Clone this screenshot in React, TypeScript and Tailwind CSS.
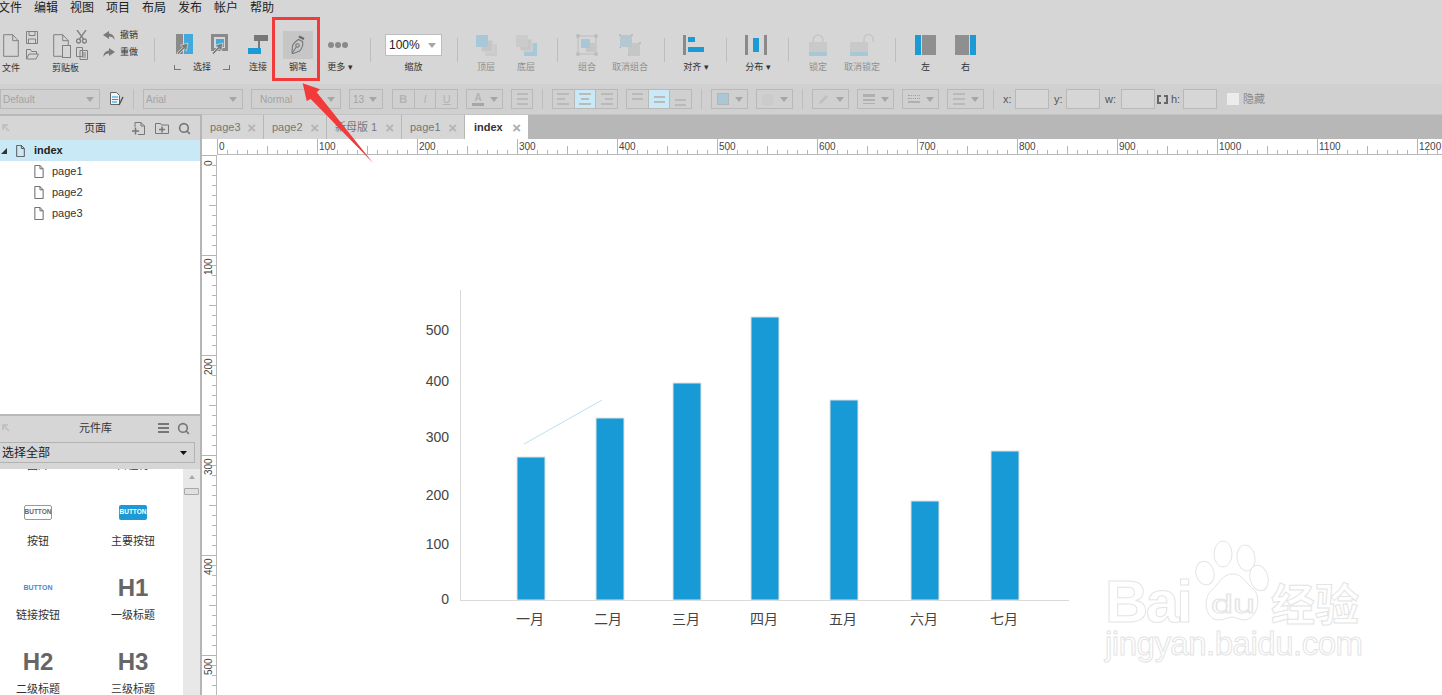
import type { ReactNode } from "react";
import { Search } from "lucide-react";

const menus = ["文件", "编辑", "视图", "项目", "布局", "发布", "帐户", "帮助"];

const bars = [
  { x: 517, top: 457, label: "一月", cx: 530 },
  { x: 596, top: 418, label: "二月", cx: 608 },
  { x: 673, top: 383, label: "三月", cx: 686 },
  { x: 751, top: 317, label: "四月", cx: 764 },
  { x: 830, top: 400, label: "五月", cx: 843 },
  { x: 911, top: 501, label: "六月", cx: 924 },
  { x: 991, top: 451, label: "七月", cx: 1004 },
];

const yLabels = [
  { v: "500", y: 335 },
  { v: "400", y: 386 },
  { v: "300", y: 442 },
  { v: "200", y: 500 },
  { v: "100", y: 549 },
  { v: "0", y: 604 },
];

const tabs = [
  { label: "page3", w: "w-[62px]" },
  { label: "page2", w: "w-[63px]" },
  { label: "新母版 1", w: "w-[75px]" },
  { label: "page1", w: "w-[63px]" },
];

const cjk = "'Liberation Sans','Noto Sans CJK SC',sans-serif";

function Caret({ className = "" }: { className?: string }) {
  return (
    <svg width="8" height="5" viewBox="0 0 8 5" className={className}>
      <path d="M0 0h8L4 5z" fill="#a6a6a6" />
    </svg>
  );
}

function PageIcon({ w = 16, h = 23, stroke = "#808080" }: { w?: number; h?: number; stroke?: string }) {
  return (
    <svg width={w} height={h} viewBox="0 0 16 23" fill="none" stroke={stroke}>
      <path d="M.7.7h9l5.6 6v15.6H.7zM9.7.7v6h5.6" vectorEffect="non-scaling-stroke" strokeWidth="1" />
    </svg>
  );
}

function Cursor() {
  return (
    <path
      d="M12 9l-1.500 8-2.300-2.200-5.700 5.700-1.500-1.500 5.700-5.700L4.500 11z"
      fill="#7d7d7d"
      stroke="#d6d6d6"
      strokeWidth=".8"
    />
  );
}

function ToolItem({
  className,
  label,
  children,
  faded,
}: {
  className: string;
  label: ReactNode;
  children: ReactNode;
  faded?: boolean;
}) {
  return (
    <div className={`flex flex-col items-center ${className}`}>
      <div className="flex h-[28px] w-full items-center justify-center">{children}</div>
      <div
        className={`mt-[2px] h-[12px] whitespace-nowrap text-[9px] leading-[12px] ${
          faded ? "text-[#8f8f8f]" : "text-[#333]"
        }`}
      >
        {label}
      </div>
    </div>
  );
}

function ToolSep({ className }: { className: string }) {
  return <div className={`mt-[7px] h-[24px] w-px bg-[#bdbdbd] ${className}`} />;
}

function FormatSelect({ className, label }: { className: string; label?: string }) {
  return (
    <div
      className={`flex h-[20px] items-center justify-between border border-[#b9b9b9] pl-[2px] pr-[5px] text-[10px] text-[#a3a3a3] ${className}`}
    >
      <span>{label}</span>
      <Caret />
    </div>
  );
}

function IconSelect({ className, children }: { className: string; children: ReactNode }) {
  return (
    <div className={`flex h-[20px] items-center justify-between border border-[#b9b9b9] pl-[5px] pr-[4px] ${className}`}>
      {children}
      <Caret />
    </div>
  );
}

function Lines({ widths, align = "items-start" }: { widths: string[]; align?: string }) {
  return (
    <div className={`flex flex-col gap-[3px] ${align}`}>
      {widths.map((w, i) => (
        <div key={i} className={`h-[2px] bg-[#bababa] ${w}`} />
      ))}
    </div>
  );
}

function Cell({ className, active, children }: { className?: string; active?: boolean; children: ReactNode }) {
  return (
    <div
      className={`flex h-full flex-1 items-center justify-center border-r border-[#b9b9b9] last:border-r-0 ${
        active ? "bg-[#c9e9f7]" : ""
      } ${className ?? ""}`}
    >
      {children}
    </div>
  );
}

function NumberBox() {
  return <div className="h-[20px] w-[34px] border border-[#b9b9b9] bg-[#d6d6d6]" />;
}

function CornerArrow() {
  return (
    <svg width="8" height="8" viewBox="0 0 8 8" fill="none" stroke="#bdbdbd" strokeWidth="1.6">
      <path d="M1 6V1h5M1 1l6 6" />
    </svg>
  );
}

function Toolbar() {
  return (
    <div className="flex h-[68px] items-start bg-[#d6d6d6] pt-[15px]">
      {/* 文件 */}
      <div className="-mt-[2px] flex w-[44px] flex-col">
        <div className="flex h-[32px] items-center">
          <div className="ml-[3px]">
            <PageIcon />
          </div>
          <div className="ml-[7px] flex flex-col gap-[4px]">
            <svg width="12" height="13" viewBox="0 0 12 13" fill="none" stroke="#808080">
              <path d="M.5.5h11v12H.5zM3 .5v4h6v-4M2.500 8h7v4.500h-7z" />
            </svg>
            <svg width="13" height="12" viewBox="0 0 13 12" fill="none" stroke="#808080">
              <path d="M.5 11V1.500h4l1 2h5V6M.5 11l2.500-5h9.500l-2.500 5z" />
            </svg>
          </div>
        </div>
        <div className="mt-[1px] h-[12px] pl-[2px] text-[9px] leading-[12px] text-[#333]">文件</div>
      </div>

      {/* 剪贴板 */}
      <div className="-mt-[2px] ml-[8px] flex w-[44px] flex-col">
        <div className="flex h-[32px] items-center">
          <div className="relative ml-[1px]">
            <PageIcon />
            <div className="absolute -bottom-px -right-[2px] h-[13px] w-[9px] border border-[#808080] bg-[#d6d6d6]" />
          </div>
          <div className="ml-[7px] flex flex-col gap-[3px]">
            <svg width="11" height="14" viewBox="0 0 11 14" fill="none" stroke="#808080" strokeWidth="1.3">
              <path d="M1 0l6.500 9M10 0L3.500 9" />
              <circle cx="2.500" cy="11" r="2" />
              <circle cx="8.500" cy="11" r="2" />
            </svg>
            <svg width="12" height="13" viewBox="0 0 12 13" fill="none" stroke="#808080">
              <path d="M.5.5h6v9h-6zM4 3.500h7.500v9H4zM6 6h4M6 8h4M6 10h4" />
            </svg>
          </div>
        </div>
        <div className="mt-[1px] h-[12px] text-[9px] leading-[12px] text-[#333]">剪贴板</div>
      </div>

      {/* 撤销 重做 */}
      <div className="mt-[-1px] ml-[7px] flex w-[40px] flex-col gap-[5px]">
        <div className="flex h-[12px] items-center gap-[5px] text-[9px] text-[#333]">
          <svg width="12" height="10" viewBox="0 0 12 10">
            <path d="M6 0L0 4l6 4V5.500c2.500 0 4.500 1 5.500 3.500 0-4-2-6-5.500-6.500z" fill="#7a7a7a" />
          </svg>
          撤销
        </div>
        <div className="flex h-[12px] items-center gap-[5px] text-[9px] text-[#333]">
          <svg width="12" height="10" viewBox="0 0 12 10">
            <path d="M6 0l6 4-6 4V5.500C3.500 5.500 1.500 6.500.5 9c0-4 2-6 5.500-6.500z" fill="#7a7a7a" />
          </svg>
          重做
        </div>
      </div>

      <ToolSep className="ml-[11px]" />

      {/* 选择 */}
      <div className="ml-[19px] flex w-[56px] flex-col">
        <div className="flex h-[28px] items-center justify-between px-[2px]">
          <svg width="17" height="22" viewBox="0 0 17 22">
            <rect x="0" y="0" width="7" height="20" fill="#8a8a8a" />
            <rect x="8" y="0" width="9" height="20" fill="#41a9dc" />
            <Cursor />
          </svg>
          <svg width="17" height="22" viewBox="0 0 17 22">
            <rect x="1.500" y="1.500" width="14" height="14" fill="none" stroke="#8a8a8a" strokeWidth="3" />
            <rect x="5" y="5" width="8" height="8" fill="#41a9dc" />
            <Cursor />
          </svg>
        </div>
        <div className="mt-[2px] flex h-[12px] items-center justify-between text-[9px] leading-[12px] text-[#333]">
          <div className="h-[5px] w-[7px] border-b border-l border-[#777]" />
          选择
          <div className="h-[5px] w-[7px] border-b border-r border-[#777]" />
        </div>
      </div>

      <ToolItem className="ml-[18px] w-[20px]" label="连接">
        <svg width="20" height="20" viewBox="0 0 20 20">
          <rect x="6" y="0" width="14" height="6" fill="#777" />
          <path d="M11 6v7" stroke="#777" strokeWidth="2" />
          <rect x="0" y="13" width="13" height="6" fill="#1b9ad6" />
        </svg>
      </ToolItem>

      <ToolItem className="ml-[15px] w-[30px]" label="钢笔">
        <div className="flex h-[28px] w-[30px] items-center justify-center bg-[#c6c6c6]">
          <svg width="16" height="20" viewBox="0 0 16 20" fill="none" stroke="#777" strokeWidth="1.1">
            <path d="M9 1.500l5 2.500" strokeWidth="2.500" stroke="#6a6a6a" />
            <path d="M8.500 4.500l4 2c.8 3-.5 7-3 9.500L3 18.700l-1-.7.500-7c1-3 3.500-5 6-6.500z" />
            <circle cx="7.500" cy="10.500" r="1.700" />
            <path d="M2.300 18l4-6" />
          </svg>
        </div>
      </ToolItem>

      <ToolItem className="ml-[14px] w-[26px]" label="更多 ▾">
        <div className="-ml-[4px] flex gap-[1px]">
          <div className="size-[6px] rounded-full bg-[#8a8a8a]" />
          <div className="size-[6px] rounded-full bg-[#8a8a8a]" />
          <div className="size-[6px] rounded-full bg-[#8a8a8a]" />
        </div>
      </ToolItem>

      <ToolSep className="ml-[17px]" />

      <ToolItem className="ml-[14px] w-[57px]" label="缩放">
        <div className="flex h-[22px] w-full items-center justify-between border border-[#bdbdbd] bg-white pl-[3px] pr-[5px] text-[12px] text-[#222]">
          100%
          <Caret />
        </div>
      </ToolItem>

      <ToolSep className="ml-[15px]" />

      <ToolItem className="ml-[13px] w-[30px]" label="顶层" faded>
        <svg width="21" height="21" viewBox="0 0 21 21">
          <rect x="9" y="9" width="12" height="12" fill="#cbcbcb" />
          <rect x="5" y="5" width="12" height="12" fill="#c6c6c6" stroke="#d6d6d6" />
          <rect x="0" y="0" width="12" height="12" fill="#a9c8d7" />
        </svg>
      </ToolItem>

      <ToolItem className="ml-[10px] w-[30px]" label="底层" faded>
        <svg width="21" height="21" viewBox="0 0 21 21">
          <rect x="8" y="8" width="13" height="13" fill="#a9c8d7" />
          <rect x="4" y="4" width="12" height="12" fill="#c6c6c6" stroke="#d6d6d6" />
          <rect x="0" y="0" width="12" height="12" fill="#cbcbcb" />
        </svg>
      </ToolItem>

      <ToolSep className="ml-[16px]" />

      <ToolItem className="ml-[14px] w-[30px]" label="组合" faded>
        <svg width="22" height="22" viewBox="0 0 22 22">
          <rect x="2" y="2" width="18" height="18" fill="none" stroke="#bcbcbc" />
          <rect x="10" y="9" width="9" height="9" fill="#c6c6c6" />
          <rect x="5" y="5" width="9" height="9" fill="#a9c8d7" />
          <circle cx="2" cy="2" r="2" fill="#bcbcbc" />
          <circle cx="20" cy="2" r="2" fill="#bcbcbc" />
          <circle cx="2" cy="20" r="2" fill="#bcbcbc" />
          <circle cx="20" cy="20" r="2" fill="#bcbcbc" />
        </svg>
      </ToolItem>

      <ToolItem className="ml-[10px] w-[36px]" label="取消组合" faded>
        <svg width="22" height="22" viewBox="0 0 22 22">
          <rect x="9" y="9" width="12" height="13" fill="#c6c6c6" />
          <rect x="1" y="1" width="12" height="12" fill="#b5c8d2" />
          <path d="M0 1h2M12 1h2M1 13v1M20 9h2M9 21h1" stroke="#bcbcbc" strokeWidth="2" />
        </svg>
      </ToolItem>

      <ToolSep className="ml-[16px]" />

      <ToolItem className="ml-[18px] w-[26px]" label="对齐 ▾">
        <div className="flex w-full">
          <svg width="21" height="20" viewBox="0 0 21 20">
            <rect x="0" y="0" width="3" height="20" fill="#8a8a8a" />
            <rect x="5" y="2" width="7" height="5" fill="#1b9ad6" />
            <rect x="5" y="12" width="16" height="5" fill="#1b9ad6" />
          </svg>
        </div>
      </ToolItem>

      <ToolSep className="ml-[17px]" />

      <ToolItem className="ml-[18px] w-[26px]" label="分布 ▾">
        <div className="flex w-full">
          <svg width="22" height="20" viewBox="0 0 22 20">
            <rect x="0" y="0" width="3" height="20" fill="#8a8a8a" />
            <rect x="8" y="3" width="6" height="14" fill="#1b9ad6" />
            <rect x="19" y="0" width="3" height="20" fill="#8a8a8a" />
          </svg>
        </div>
      </ToolItem>

      <ToolSep className="ml-[17px]" />

      <ToolItem className="ml-[14px] w-[30px]" label="锁定" faded>
        <svg width="18" height="22" viewBox="0 0 18 22">
          <path d="M4 9V6a5 5 0 0 1 10 0v3" fill="none" stroke="#c6c6c6" strokeWidth="1.5" />
          <rect x="0" y="8" width="18" height="10" fill="#c9c9c9" />
          <rect x="0" y="18" width="18" height="4" fill="#a9c8d7" />
        </svg>
      </ToolItem>

      <ToolItem className="ml-[11px] w-[36px]" label="取消锁定" faded>
        <svg width="25" height="22" viewBox="0 0 25 22">
          <path d="M14 8V5a4.500 4.500 0 0 1 9 0v3" fill="none" stroke="#c6c6c6" strokeWidth="1.5" />
          <rect x="0" y="8" width="18" height="10" fill="#c9c9c9" />
          <rect x="0" y="18" width="18" height="4" fill="#a9c8d7" />
        </svg>
      </ToolItem>

      <ToolSep className="ml-[15px]" />

      <ToolItem className="ml-[19px] w-[21px]" label="左">
        <div className="flex h-[20px] w-[21px] gap-px">
          <div className="w-[6px] bg-[#1b9ad6]" />
          <div className="flex-1 bg-[#8f8f8f]" />
        </div>
      </ToolItem>

      <ToolItem className="ml-[19px] w-[21px]" label="右">
        <div className="flex h-[20px] w-[21px] gap-px">
          <div className="flex-1 bg-[#8f8f8f]" />
          <div className="w-[6px] bg-[#1b9ad6]" />
        </div>
      </ToolItem>
    </div>
  );
}

function FormatBar() {
  return (
    <div className="flex h-[30px] items-center bg-[#d0d0d0] text-[#555]">
      <FormatSelect className="w-[100px]" label="Default" />
      <svg width="14" height="14" viewBox="0 0 14 14" className="ml-[10px]">
        <path d="M.5.5h6l3 3v9h-9z" fill="#eef4f8" stroke="#666" />
        <path d="M2 5h6M2 7.500h6M2 10h5" stroke="#1b9ad6" />
        <path d="M9 13l4-8" stroke="#555" strokeWidth="1.5" />
      </svg>
      <div className="ml-[9px] h-[20px] w-px bg-[#bdbdbd]" />
      <FormatSelect className="ml-[9px] w-[100px]" label="Arial" />
      <FormatSelect className="ml-[8px] w-[90px] pl-[8px]" label="Normal" />
      <FormatSelect className="ml-[8px] w-[34px] pl-[3px]" label="13" />

      <div className="ml-[9px] flex h-[20px] w-[66px] border border-[#b9b9b9] text-[11px] text-[#b3b3b3]">
        <Cell><span className="font-bold">B</span></Cell>
        <Cell><span className="italic">I</span></Cell>
        <Cell><span className="underline">U</span></Cell>
      </div>

      <IconSelect className="ml-[8px] w-[37px]">
        <div className="flex flex-col items-center leading-none">
          <span className="text-[10px] font-bold leading-[10px] text-[#b3b3b3]">A</span>
          <div className="h-[3px] w-[12px] bg-[#a6a6a6]" />
        </div>
      </IconSelect>

      <div className="ml-[8px] flex h-[20px] w-[22px] items-center justify-center border border-[#b9b9b9]">
        <Lines widths={["w-[11px]", "w-[11px]", "w-[11px]"]} />
      </div>

      <div className="ml-[9px] h-[20px] w-px bg-[#bdbdbd]" />

      <div className="ml-[9px] flex h-[20px] w-[66px] border border-[#b9b9b9]">
        <Cell><Lines widths={["w-[12px]", "w-[8px]", "w-[12px]"]} /></Cell>
        <Cell active><Lines widths={["w-[12px]", "w-[8px]", "w-[12px]"]} align="items-center" /></Cell>
        <Cell><Lines widths={["w-[12px]", "w-[8px]", "w-[12px]"]} align="items-end" /></Cell>
      </div>

      <div className="ml-[8px] flex h-[20px] w-[66px] border border-[#b9b9b9]">
        <Cell className="items-start pt-[3px]"><Lines widths={["w-[11px]", "w-[11px]"]} /></Cell>
        <Cell active><Lines widths={["w-[11px]", "w-[11px]"]} /></Cell>
        <Cell className="items-end pb-[2px]"><Lines widths={["w-[11px]", "w-[11px]"]} /></Cell>
      </div>

      <div className="ml-[9px] h-[20px] w-px bg-[#bdbdbd]" />

      <IconSelect className="ml-[9px] w-[37px]">
        <div className="size-[12px] border border-[#b5b5b5] bg-[#a9c8d7]" />
      </IconSelect>
      <IconSelect className="ml-[8px] w-[37px]">
        <div className="size-[11px] rounded-[2px] bg-[#cbcbcb]" />
      </IconSelect>

      <div className="ml-[9px] h-[20px] w-px bg-[#bdbdbd]" />

      <IconSelect className="ml-[9px] w-[37px]">
        <svg width="12" height="12" viewBox="0 0 12 12">
          <path d="M1 11l1-3 6-6 2 2-6 6z" fill="#c0c0c0" />
        </svg>
      </IconSelect>
      <IconSelect className="ml-[8px] w-[37px]">
        <div className="flex flex-col gap-[2px]">
          <div className="h-[3px] w-[12px] bg-[#b0b0b0]" />
          <div className="h-[2px] w-[12px] bg-[#b0b0b0]" />
          <div className="h-px w-[12px] bg-[#b0b0b0]" />
        </div>
      </IconSelect>
      <IconSelect className="ml-[8px] w-[37px]">
        <div className="flex flex-col gap-[2px]">
          <div className="h-px w-[12px] border-t border-dotted border-[#a0a0a0]" />
          <div className="h-px w-[12px] border-t border-dotted border-[#a0a0a0]" />
          <div className="h-[2px] w-[12px] bg-[#b0b0b0]" />
        </div>
      </IconSelect>
      <IconSelect className="ml-[8px] w-[37px]">
        <Lines widths={["w-[12px]", "w-[12px]", "w-[12px]"]} />
      </IconSelect>

      <div className="ml-[9px] h-[20px] w-px bg-[#bdbdbd]" />

      <span className="ml-[9px] w-[12px] text-[11px]">x:</span>
      <NumberBox />
      <span className="ml-[5px] w-[12px] text-[11px]">y:</span>
      <NumberBox />
      <span className="ml-[5px] w-[16px] text-[11px]">w:</span>
      <NumberBox />
      <svg width="11" height="9" viewBox="0 0 11 9" fill="none" stroke="#666" strokeWidth="2" className="ml-[2px]">
        <path d="M4 1H1v7h3M7 1h3v7H7" />
      </svg>
      <span className="ml-[3px] w-[12px] text-[11px]">h:</span>
      <NumberBox />
      <div className="ml-[10px] size-[12px] bg-[#ececec]" />
      <span className="ml-[4px] text-[11px] text-[#8a8a8a]">隐藏</span>
    </div>
  );
}

function PanelHeader({ children }: { children: ReactNode }) {
  return (
    <div className="flex h-[26px] shrink-0 items-center border-t-2 border-[#b9b9b9] bg-[#d6d6d6]">
      <div className="ml-[2px] flex w-[8px]">
        <CornerArrow />
      </div>
      {children}
    </div>
  );
}

function PageRow({ name }: { name: string }) {
  return (
    <div className="flex h-[21px] items-center pl-[34px] text-[11px] text-[#333]">
      <PageIcon w={10} h={13} stroke="#666" />
      <span className="ml-[8px]">{name}</span>
    </div>
  );
}

function Widget({ icon, label, className = "h-[74px]" }: { icon?: ReactNode; label: string; className?: string }) {
  return (
    <div className={`flex flex-col items-center ${className}`}>
      <div className="flex h-[52px] items-center justify-center pt-[10px]">{icon}</div>
      <div className="mt-[1px] h-[14px] text-[11px] leading-[14px] text-[#333]">{label}</div>
    </div>
  );
}

function Heading({ children }: { children: string }) {
  return <span className="mt-[4px] text-[24px] font-bold leading-[28px] text-[#666]">{children}</span>;
}

function LeftPanel() {
  return (
    <div className="flex w-[202px] shrink-0 flex-col border-r-2 border-[#b5b5b5] bg-white">
      <PanelHeader>
        <span className="ml-[74px] w-[22px] text-[11px] text-[#333]">页面</span>
        <svg width="13" height="13" viewBox="0 0 13 13" fill="none" stroke="#777" className="ml-[26px]">
          <path d="M3 5V.5h6l3.500 3.500v8.500H6M9 .5v3.500h3.500" />
          <path d="M0 9h7M3.500 5.500v7" strokeWidth="1.5" />
        </svg>
        <svg width="14" height="12" viewBox="0 0 14 12" fill="none" stroke="#777" className="ml-[10px]">
          <path d="M.5 11.500v-10h5l1 1.500h7v8.500z" />
          <path d="M4 7.500h6M7 4.500v6" strokeWidth="1.5" />
        </svg>
        <Search size={13} strokeWidth={3} color="#777" className="ml-[9px]" />
      </PanelHeader>

      <div className="flex h-[274px] shrink-0 flex-col">
        <div className="flex h-[21px] items-center bg-[#c9e9f7] text-[11px] font-bold text-[#222]">
          <svg width="6" height="6" viewBox="0 0 6 6" className="ml-[1px]">
            <path d="M6 0v6H0z" fill="#333" />
          </svg>
          <div className="ml-[9px] flex">
            <PageIcon w={9} h={12} stroke="#555" />
          </div>
          <span className="ml-[9px]">index</span>
        </div>
        <PageRow name="page1" />
        <PageRow name="page2" />
        <PageRow name="page3" />
      </div>

      <PanelHeader>
        <span className="ml-[69px] w-[33px] text-[11px] text-[#333]">元件库</span>
        <svg width="11" height="10" viewBox="0 0 11 10" className="ml-[46px]">
          <path d="M0 1h11M0 5h11M0 9h11" stroke="#777" strokeWidth="2" />
        </svg>
        <Search size={13} strokeWidth={3} color="#777" className="ml-[8px]" />
      </PanelHeader>

      <div className="h-[29px] shrink-0 bg-[#d6d6d6] pt-[2px]">
        <div className="flex h-[21px] w-[195px] items-center justify-between border-y border-r border-[#b3b3b3] pl-[2px] pr-[7px] text-[12px] text-[#222]">
          选择全部
          <svg width="7" height="4" viewBox="0 0 7 4">
            <path d="M0 0h7L3.500 4z" fill="#111" />
          </svg>
        </div>
      </div>

      <div className="flex min-h-0 flex-1 overflow-hidden">
        <div className="-mt-[64px] grid h-fit w-[183px] shrink-0 grid-cols-[76px_114px] content-start">
          <Widget label="图片" className="h-[76px]" />
          <Widget label="占位符" className="h-[76px]" />
          <Widget
            icon={
              <div className="flex h-[15px] w-[28px] items-center justify-center rounded-[2px] border border-[#999] text-[6.5px] font-bold text-[#666]">
                BUTTON
              </div>
            }
            label="按钮"
          />
          <Widget
            icon={
              <div className="flex h-[15px] w-[28px] items-center justify-center rounded-[2px] bg-[#1b9ad6] text-[6.5px] font-bold text-white">
                BUTTON
              </div>
            }
            label="主要按钮"
          />
          <Widget icon={<span className="mt-[4px] text-[7px] font-bold text-[#4a8cc9]">BUTTON</span>} label="链接按钮" />
          <Widget icon={<Heading>H1</Heading>} label="一级标题" />
          <Widget icon={<Heading>H2</Heading>} label="二级标题" />
          <Widget icon={<Heading>H3</Heading>} label="三级标题" />
        </div>
        <div className="flex flex-1 flex-col items-center bg-[#e8e8e8] pt-[6px]">
          <svg width="6" height="4" viewBox="0 0 6 4">
            <path d="M3 0l3 4H0z" fill="#a8a8a8" />
          </svg>
          <div className="mt-[9px] h-[7px] w-[15px] rounded-[1px] border border-[#a8a8a8] bg-[#e0e0e0]" />
        </div>
      </div>
    </div>
  );
}

function HorizontalRuler() {
  const ticks = Array.from({ length: 124 }, (_, i) => i * 10);
  return (
    <svg width="1240" height="16" viewBox="202 139 1240 16" className="block shrink-0 bg-white">
      {ticks.map((v) => {
        const x = 217.5 + v;
        const top = v % 100 === 0 ? 139 : v % 50 === 0 ? 146 : 150;
        return <line key={v} x1={x} x2={x} y1={top} y2={154} stroke="#b5b5b5" />;
      })}
      <line x1="202" x2="1442" y1="154.5" y2="154.5" stroke="#b9b9b9" />
      <rect x="202" y="139" width="15" height="16" fill="#fff" />
      {ticks
        .filter((v) => v % 100 === 0)
        .map((v) => (
          <text key={v} x={219 + v} y={150} fontSize="10" fill="#444">
            {v}
          </text>
        ))}
    </svg>
  );
}

function VerticalRuler() {
  const ticks = Array.from({ length: 55 }, (_, i) => i * 10);
  return (
    <svg width="15" height="540" viewBox="202 155 15 540" className="block shrink-0 bg-white">
      {ticks.map((v) => {
        const y = 155.5 + v;
        const left = v % 100 === 0 ? 202 : v % 50 === 0 ? 209 : 212;
        return <line key={v} x1={left} x2={216} y1={y} y2={y} stroke="#b5b5b5" />;
      })}
      <line x1="216.5" x2="216.5" y1="155" y2="695" stroke="#b9b9b9" />
      {ticks
        .filter((v) => v % 100 === 0)
        .map((v) => (
          <text
            key={v}
            fontSize="10"
            fill="#444"
            transform={`translate(212 ${v === 0 ? 166 : 175 + v}) rotate(-90)`}
          >
            {v}
          </text>
        ))}
    </svg>
  );
}

function Chart() {
  return (
    <svg
      width="1225"
      height="540"
      viewBox="217 155 1225 540"
      className="absolute left-0 top-0"
      style={{ fontFamily: cjk }}
    >
      <path d="M460.5 290v310.5H1069" fill="none" stroke="#d9d9d9" />
      {yLabels.map((l) => (
        <text key={l.v} x="449" y={l.y} textAnchor="end" fontSize="14" fill="#444">
          {l.v}
        </text>
      ))}
      {bars.map((b) => (
        <g key={b.label}>
          <rect x={b.x} y={b.top} width="28" height={600 - b.top} fill="#189ad6" stroke="#e2e2e2" strokeWidth="1" />
          <text x={b.cx} y="624" textAnchor="middle" fontSize="14" fill="#444">
            {b.label}
          </text>
        </g>
      ))}
      <line x1="524" y1="444" x2="602" y2="400" stroke="#b8e2ee" strokeWidth="1" />

      {/* watermark */}
      <g fill="#fff" stroke="#e4e4e4" strokeWidth="1">
        <text x="1105" y="622" fontSize="60" fontWeight="700" fontFamily="'Liberation Sans',sans-serif" textLength="88">
          Bai
        </text>
        <ellipse cx="1205" cy="573" rx="9" ry="12" transform="rotate(-15 1205 573)" />
        <ellipse cx="1223" cy="554" rx="9" ry="13" />
        <ellipse cx="1246" cy="558" rx="9" ry="13" transform="rotate(-8 1246 558)" />
        <ellipse cx="1259" cy="578" rx="9" ry="13" transform="rotate(-15 1259 578)" />
        <path d="M1233 574c10 0 13 10 20 15 9 7 5 31-9 31-4 0-8-3-12-3s-8 3-13 3c-14 0-17-22-7-30 7-6 10-16 21-16z" />
        <text
          x="1211"
          y="613"
          fontSize="26"
          fontFamily="'Liberation Sans',sans-serif"
          textLength="44"
          lengthAdjust="spacingAndGlyphs"
        >
          du
        </text>
        <text x="1271" y="621" fontSize="44" fontWeight="700" fontFamily="'Noto Sans CJK SC',sans-serif">
          经验
        </text>
        <text x="1105" y="655" fontSize="33" fontFamily="'Liberation Sans',sans-serif" textLength="258">
          jingyan.baidu.com
        </text>
      </g>
    </svg>
  );
}

function Workspace() {
  return (
    <div className="flex min-w-0 flex-1 flex-col">
      <div className="flex h-[25px] shrink-0 border-t border-[#c4c4c4] bg-[#b7b7b7]">
        {tabs.map((t) => (
          <div
            key={t.label}
            className={`flex items-center justify-between border-r border-[#b7b7b7] bg-[#d6d6d6] pl-[8px] pr-[7px] text-[11px] text-[#777] ${t.w}`}
          >
            <span>{t.label}</span>
            <span className="text-[15px] font-bold leading-none text-[#b3b3b3]">×</span>
          </div>
        ))}
        <div className="flex w-[63px] items-center justify-between bg-white pl-[9px] pr-[7px] text-[11px] font-bold text-[#333]">
          <span>index</span>
          <span className="text-[15px] leading-none text-[#aaa]">×</span>
        </div>
      </div>
      <HorizontalRuler />
      <div className="flex min-h-0 flex-1">
        <VerticalRuler />
        <div className="relative min-w-0 flex-1 overflow-hidden bg-white">
          <Chart />
        </div>
      </div>
    </div>
  );
}

export default function App() {
  return (
    <div className="relative flex h-[695px] w-[1442px] flex-col overflow-hidden bg-white [font-family:'Liberation_Sans','Noto_Sans_CJK_SC',sans-serif]">
      <div className="-ml-[2px] flex h-[16px] gap-3 bg-[#d6d6d6] text-[12px] leading-[16px] text-[#222]">
        {menus.map((m) => (
          <span key={m}>{m}</span>
        ))}
      </div>
      <Toolbar />
      <FormatBar />
      <div className="flex min-h-0 flex-1">
        <LeftPanel />
        <Workspace />
      </div>

      {/* red callout over the pen tool */}
      <div className="absolute left-[272px] top-[17px] h-[64px] w-[48px] border-[3px] border-[#f23a3a]" />
      <svg width="1442" height="695" viewBox="0 0 1442 695" className="pointer-events-none absolute left-0 top-0">
        <path d="M302.7 83.3L320 89.3L316.7 92.3L373.3 163.3L310.7 99L306.7 101z" fill="#f23a3a" />
      </svg>
    </div>
  );
}
